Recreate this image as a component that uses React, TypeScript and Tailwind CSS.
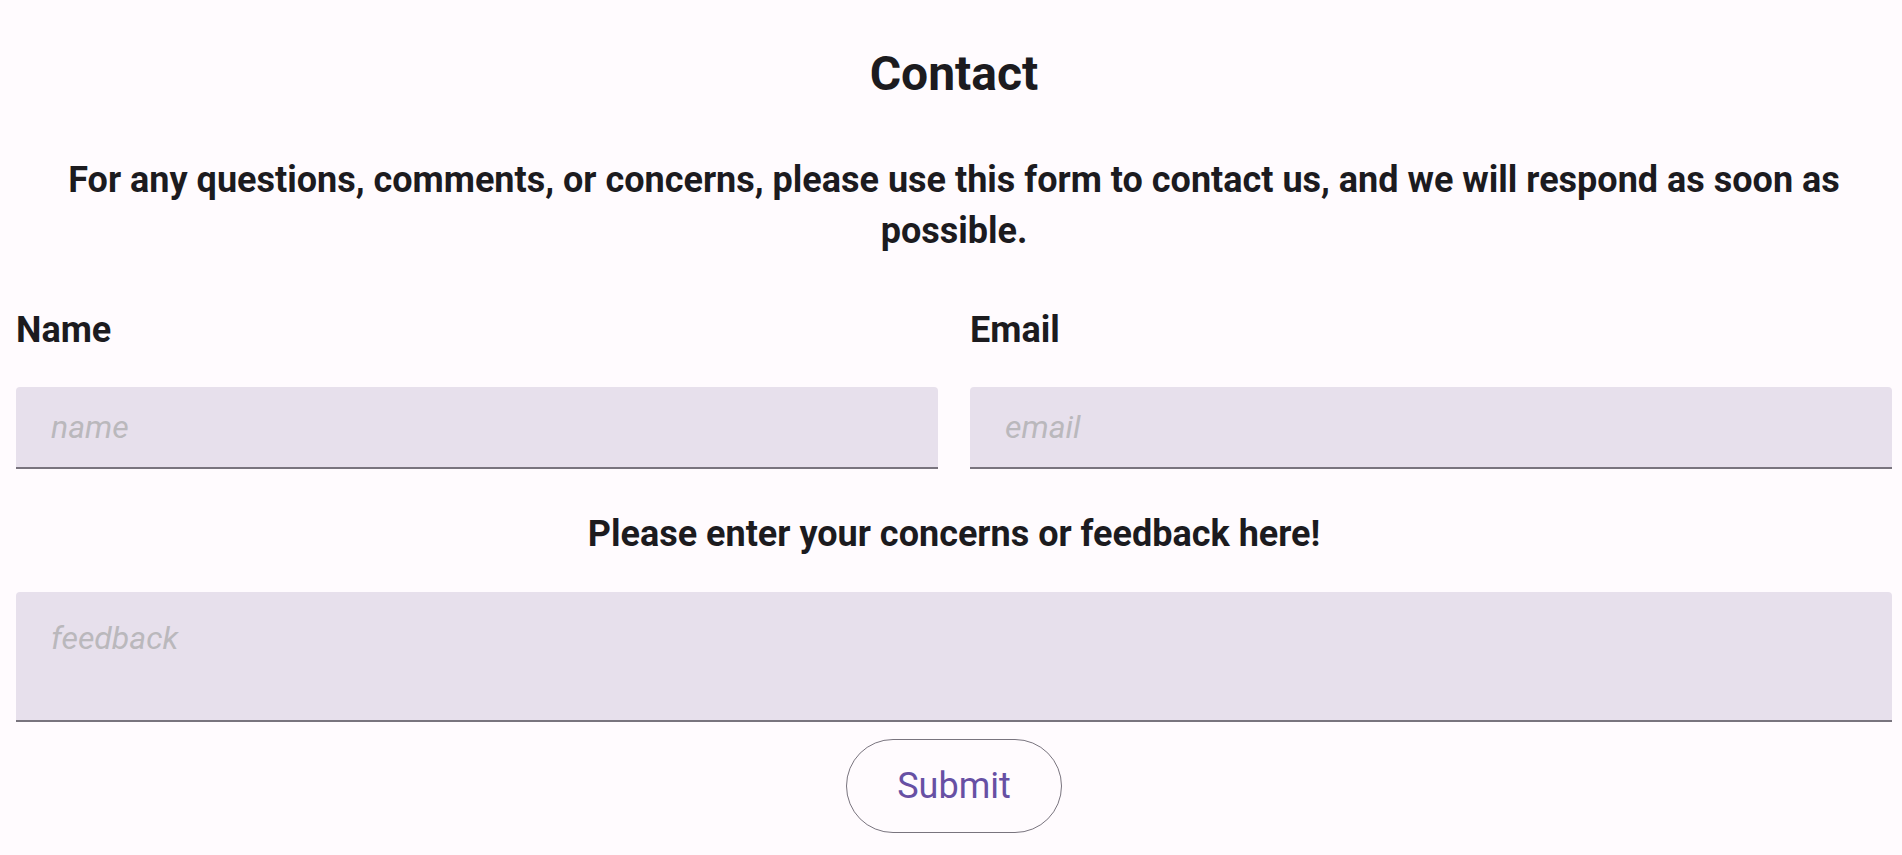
import { useState } from "react"

export default function App() {
  const [name, setName] = useState("")
  const [email, setEmail] = useState("")
  const [feedback, setFeedback] = useState("")

  return (
    <div className="min-h-screen w-full bg-[#fffbfe] pl-4 pr-[10px] font-['Roboto',sans-serif] text-[#1c1b1f]">
      <h1 className="pt-[46px] text-center text-[48px] font-bold leading-[56px]">Contact</h1>

      <p className="mt-[53px] text-center text-[36px] font-bold leading-[51px]">
        For any questions, comments, or concerns, please use this form to contact us, and we will respond as soon as
        possible.
      </p>

      {/* name + email */}
      <div className="mt-[48px] grid grid-cols-2 gap-8">
        <div className="flex flex-col">
          <label className="text-[36px] font-bold leading-[51px]">Name</label>
          <input
            value={name}
            onChange={(e) => setName(e.target.value)}
            placeholder="name"
            className="mt-[31px] h-[82px] w-full rounded-t-[4px] border-b-2 border-[#79747e] bg-[#e7e0ec] px-[35px] text-[32px] italic outline-none placeholder:text-[#bab8bc]"
          />
        </div>
        <div className="flex flex-col">
          <label className="text-[36px] font-bold leading-[51px]">Email</label>
          <input
            value={email}
            onChange={(e) => setEmail(e.target.value)}
            placeholder="email"
            className="mt-[31px] h-[82px] w-full rounded-t-[4px] border-b-2 border-[#79747e] bg-[#e7e0ec] px-[35px] text-[32px] italic outline-none placeholder:text-[#bab8bc]"
          />
        </div>
      </div>

      <h2 className="mt-[40px] text-center text-[36px] font-bold leading-[51px]">
        Please enter your concerns or feedback here!
      </h2>

      <textarea
        value={feedback}
        onChange={(e) => setFeedback(e.target.value)}
        placeholder="feedback"
        className="mt-[32px] block h-[130px] w-full resize-none rounded-t-[4px] border-b-2 border-[#79747e] bg-[#e7e0ec] px-[35px] pt-[22px] text-[32px] italic outline-none placeholder:text-[#bab8bc]"
      />

      <div className="mt-[17px] flex justify-center pb-[22px]">
        <button className="h-[94px] w-[216px] rounded-full border border-[#79747e] text-[36px] text-[#6750a4]">
          Submit
        </button>
      </div>
    </div>
  )
}
